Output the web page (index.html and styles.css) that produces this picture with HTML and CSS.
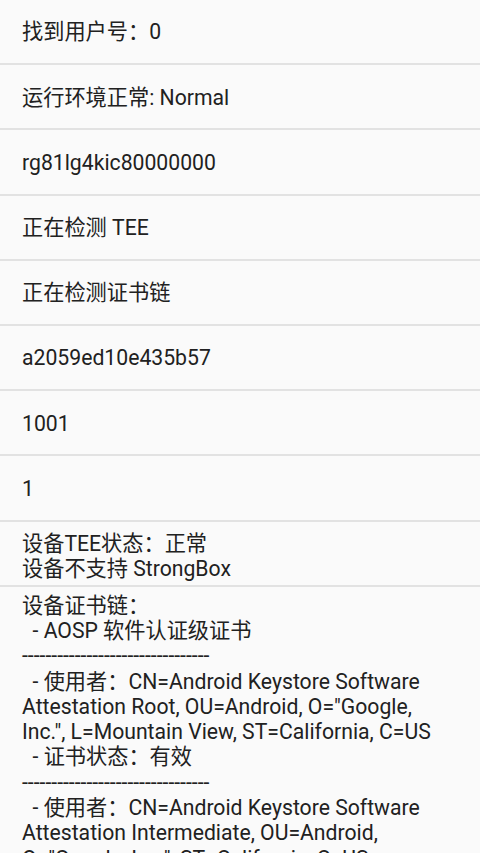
FILE: index.html
```html
<!DOCTYPE html>
<html lang="zh-CN">
<head>
<meta charset="utf-8">
<title>检测</title>
<link rel="stylesheet" href="styles.css">
</head>
<body>
<div class="list">
  <div class="row">找到用户号：0</div>
  <div class="row">运行环境正常: Normal</div>
  <div class="row">rg81lg4kic80000000</div>
  <div class="row">正在检测 TEE</div>
  <div class="row">正在检测证书链</div>
  <div class="row">a2059ed10e435b57</div>
  <div class="row">1001</div>
  <div class="row">1</div>
  <div class="row multi">设备TEE状态：正常<br>设备不支持 StrongBox</div>
  <div class="row multi top"><span class="pre">设备证书链：
  - AOSP 软件认证级证书
<span class="dash">--------------------------------</span>
  - 使用者：CN=Android Keystore Software Attestation Root, OU=Android, O="Google, Inc.", L=Mountain View, ST=California, C=US
  - 证书状态：有效
<span class="dash">--------------------------------</span>
  - 使用者：CN=Android Keystore Software Attestation Intermediate, OU=Android, O="Google, Inc.", ST=California, C=US
  - 证书状态：有效
<span class="dash">--------------------------------</span></span></div>
</div>
</body>
</html>
```
FILE: styles.css
```css
html, body {
  margin: 0;
  padding: 0;
  background: #fafafa;
}
body {
  font-family: "Roboto", "Noto Sans CJK SC", sans-serif;
  font-size: 21.2px;
  color: #212121;
  overflow: hidden;
  height: 853px;
}
.list {
  display: flex;
  flex-direction: column;
}
.row {
  box-sizing: border-box;
  min-height: 65.2px;
  padding: 1px 26px 0 22px;
  display: flex;
  align-items: center;
  border-bottom: 2px solid #e2e2e2;
  line-height: 25.3px;
}
.row.multi {
  display: block;
  padding-top: 9px;
  padding-bottom: 0;
}
.row.top {
  padding-top: 6px;
}
.pre {
  white-space: pre-wrap;
}
```
